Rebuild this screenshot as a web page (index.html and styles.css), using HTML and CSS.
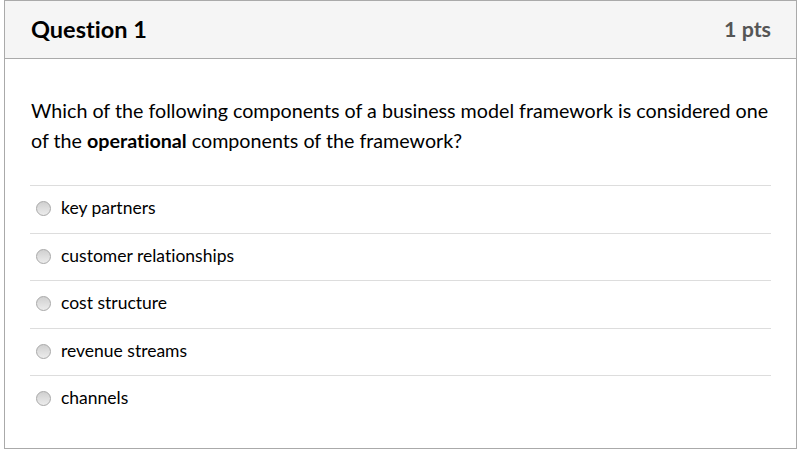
FILE: index.html
```html
<!DOCTYPE html>
<html>
<head>
<meta charset="utf-8">
<link rel="stylesheet" href="styles.css">
</head>
<body>
<div class="question">
  <div class="header">
    <h2 class="title">Question 1</h2>
    <span class="pts">1 pts</span>
  </div>
  <div class="content">
    <p class="text">Which of the following components of a business model framework is considered one<br>of the <strong>operational</strong> components of the framework?</p>
    <div class="answers">
      <div class="answer"><span class="radio"></span><span class="label">key partners</span></div>
      <div class="answer"><span class="radio"></span><span class="label">customer relationships</span></div>
      <div class="answer"><span class="radio"></span><span class="label">cost structure</span></div>
      <div class="answer"><span class="radio"></span><span class="label">revenue streams</span></div>
      <div class="answer"><span class="radio"></span><span class="label">channels</span></div>
    </div>
  </div>
</div>
</body>
</html>
```
FILE: styles.css
```css
html, body {
  margin: 0;
  padding: 0;
  background: #fff;
}
body {
  font-family: Lato, "Open Sans", sans-serif;
  color: #000;
  font-variant-ligatures: none;
}
.question {
  margin-left: 4px;
  width: 791px;
  height: 447px;
  border: 1px solid #aaaaaa;
}
.header {
  height: 58px;
  box-sizing: border-box;
  background: #f5f5f5;
  border-bottom: 1px solid #aaaaaa;
  display: flex;
  align-items: center;
  justify-content: space-between;
  padding: 0 25px 2px 26px;
}
.title {
  margin: 0;
  font-size: 23.5px;
  font-weight: 700;
  color: #000;
}
.pts {
  font-size: 21.4px;
  font-weight: 700;
  color: #555;
}
.content {
  padding: 37px 25px 0 25px;
}
.text {
  margin: 0 0 29px 0;
  font-size: 19.7px;
  line-height: 30px;
  padding-left: 1px;
}
.text strong {
  font-weight: 700;
}
.answer {
  height: 47.5px;
  box-sizing: border-box;
  border-top: 1px solid #dddddd;
  display: flex;
  align-items: center;
  padding: 0 0 3px 6px;
}
.radio {
  width: 13px;
  height: 13px;
  border-radius: 50%;
  border: 1px solid #a8a8a8;
  background: linear-gradient(#d0d0d0, #ececec);
  margin: 2px 10px 0 0;
  flex: none;
}
.label {
  font-size: 17.5px;
}
```
